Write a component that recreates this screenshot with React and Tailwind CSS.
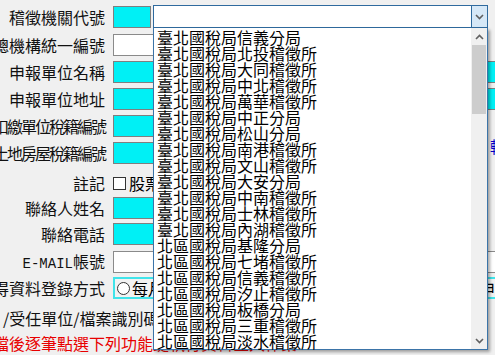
import React from 'react';

const offices = [
  '臺北國稅局信義分局',
  '臺北國稅局北投稽徵所',
  '臺北國稅局大同稽徵所',
  '臺北國稅局中北稽徵所',
  '臺北國稅局萬華稽徵所',
  '臺北國稅局中正分局',
  '臺北國稅局松山分局',
  '臺北國稅局南港稽徵所',
  '臺北國稅局文山稽徵所',
  '臺北國稅局大安分局',
  '臺北國稅局中南稽徵所',
  '臺北國稅局士林稽徵所',
  '臺北國稅局內湖稽徵所',
  '北區國稅局基隆分局',
  '北區國稅局七堵稽徵所',
  '北區國稅局信義稽徵所',
  '北區國稅局汐止稽徵所',
  '北區國稅局板橋分局',
  '北區國稅局三重稽徵所',
  '北區國稅局淡水稽徵所',
];

function Chevron({ up }) {
  return (
    <svg width="9" height="6" viewBox="0 0 9 6">
      <path
        d={up ? 'M1 5 L4.5 1.5 L8 5' : 'M1 1 L4.5 4.5 L8 1'}
        fill="none"
        stroke="#606060"
        strokeWidth="1.6"
      />
    </svg>
  );
}

function Label({ children, tight }) {
  return (
    <div
      className={`w-[105px] shrink-0 flex justify-end whitespace-nowrap text-[16px] leading-none text-[#111] ${
        tight ? 'tracking-[-2px]' : ''
      }`}
    >
      <span>{children}</span>
    </div>
  );
}

function Cyan({ w }) {
  return <div className={`h-[22px] border border-[#7f7f7f] bg-[#00f0f5] shrink-0 ${w}`} />;
}

function White({ w }) {
  return <div className={`h-[22px] border border-[#8a8a8a] bg-white shrink-0 ${w}`} />;
}

function OfficeSelect() {
  return (
    <div className="relative ml-[2px] w-[335px] h-[23px] shrink-0">
      <div className="flex h-full border border-[#2f6a9e] bg-white">
        <div className="flex-1" />
        <div className="w-[16px] border-l border-[#2f6a9e] bg-[#d6e8f7] flex items-center justify-center">
          <Chevron />
        </div>
      </div>
      <div className="absolute left-0 top-full w-[335px] h-[322px] border border-t-0 border-[#3b74a8] bg-white shadow-[2px_2px_3px_rgba(0,0,0,0.35)] flex">
        <ul className="flex-1 pt-[1px] pl-[3px]">
          {offices.map((o) => (
            <li key={o} className="h-[16px] text-[16px] leading-[16px] text-black whitespace-nowrap">
              {o}
            </li>
          ))}
        </ul>
        <div className="w-[16px] bg-[#f0f0f0] flex flex-col">
          <div className="h-[17px] flex items-center justify-center">
            <Chevron up />
          </div>
          <div className="mx-[1px] h-[69px] bg-[#cdcdcd]" />
          <div className="flex-1" />
          <div className="h-[17px] flex items-center justify-center">
            <Chevron />
          </div>
        </div>
      </div>
    </div>
  );
}

export default function App() {
  return (
    <div className="w-[495px] h-[355px] overflow-hidden bg-[#f0f0f0] font-['Noto_Sans_CJK_TC','Noto_Sans',sans-serif]">
      <div className="flex flex-col pt-[5px]">
        <div className="relative z-10 flex items-center gap-[8px] h-[23px]">
          <Label>稽徵機關代號</Label>
          <div className="flex items-center">
            <Cyan w="w-[38px]" />
            <OfficeSelect />
          </div>
        </div>

        <div className="flex items-center gap-[8px] mt-[6px]">
          <Label>總機構統一編號</Label>
          <White w="w-[250px]" />
        </div>

        <div className="flex items-center gap-[8px] mt-[5px]">
          <Label>申報單位名稱</Label>
          <Cyan w="w-[400px]" />
        </div>

        <div className="flex items-center gap-[8px] mt-[5px]">
          <Label>申報單位地址</Label>
          <Cyan w="w-[400px]" />
        </div>

        <div className="flex items-center gap-[8px] mt-[5px]">
          <Label tight>扣繳單位稅籍編號</Label>
          <Cyan w="w-[300px]" />
        </div>

        <div className="flex items-center gap-[8px] mt-[5px]">
          <Label tight>土地房屋稅籍編號</Label>
          <Cyan w="w-[300px]" />
          <span className="ml-[69px] -mt-[14px] text-[16px] leading-none text-[#0000c8] whitespace-nowrap">輔助說明</span>
        </div>

        <div className="flex items-center gap-[8px] mt-[8px] h-[22px]">
          <Label>註記</Label>
          <div className="flex items-center gap-[3px] whitespace-nowrap text-[16px] leading-none">
            <div className="w-[13px] h-[13px] border border-[#333] bg-white" />
            <span>股票</span>
          </div>
        </div>

        <div className="flex items-center gap-[8px] mt-[3px]">
          <Label>聯絡人姓名</Label>
          <Cyan w="w-[200px]" />
        </div>

        <div className="flex items-center gap-[8px] mt-[4px]">
          <Label>聯絡電話</Label>
          <Cyan w="w-[200px]" />
        </div>

        <div className="flex items-center gap-[8px] mt-[6px]">
          <Label>
            <span className="font-['Liberation_Mono',monospace] text-[14px]">E-MAIL</span>帳號
          </Label>
          <White w="w-[400px]" />
        </div>

        <div className="flex items-center gap-[8px] mt-[4px]">
          <Label>所得資料登錄方式</Label>
          <div className="w-[400px] h-[22px] shrink-0 border-2 border-[#40e4ea] bg-[#f2f2f2] flex items-center pl-[2px] text-[16px] leading-none whitespace-nowrap">
            <div className="w-[372px] flex items-center gap-[2px]">
              <div className="w-[13px] h-[13px] rounded-full border border-[#333] bg-white" />
              <span>每月申報</span>
            </div>
            <span>分批申報</span>
          </div>
        </div>

        <div className="mt-[8px] h-[22px] flex items-center pl-[3px] text-[16px] leading-none whitespace-nowrap text-[#111]">
          /受任單位/檔案識別碼
        </div>

        <div className="mt-[3px] h-[22px] flex items-center -ml-[7px] text-[16px] leading-none whitespace-nowrap text-[#e80000]">
          檔後逐筆點選下列功能鍵執行資料匯入作業
        </div>
      </div>
    </div>
  );
}
